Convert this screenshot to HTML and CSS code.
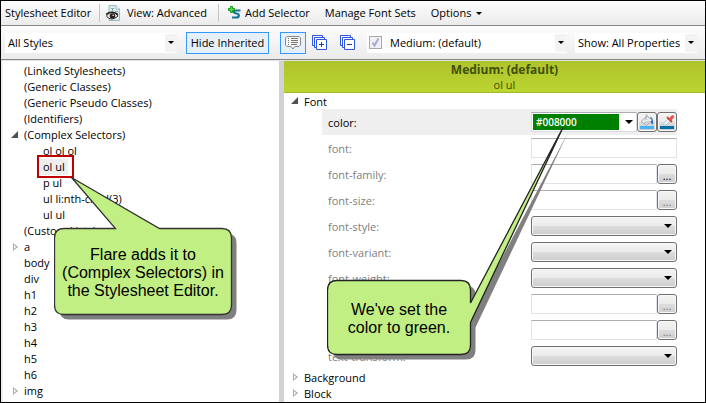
FILE: index.html
```html
<!DOCTYPE html>
<html lang="en">
<head>
<meta charset="utf-8">
<title>Stylesheet Editor</title>
<link rel="stylesheet" href="styles.css">
</head>
<body>
<div class="window">
  <header class="bar menu">
    <span class="title">Stylesheet Editor</span>
    <button class="item view">
      <svg width="15" height="16" viewBox="0 0 15 16"><path d="M3 .5h7l3.500 3.500v11.500H3z" fill="#dcebee" stroke="#9fb9bf"/><path d="M10 .5V4h3.500" fill="#fff" stroke="#9fb9bf"/><path d="M5 3.500h3M6.500 3.500v3M9 6.500h3" stroke="#8aa3a8"/><path d="M.5 11Q3 6.500 7 7.500Q10.500 8 12 11Q8.500 14.500 5 14Q2 13.500.5 11z" fill="#eee" stroke="#333"/><path d="M0 9.500Q5 5 12 9.500" fill="none" stroke="#222" stroke-width="1.500"/><circle cx="6.500" cy="11" r="2.800" fill="#2c211c"/><circle cx="7.200" cy="10.200" r=".8" fill="#fff"/></svg>
      View: Advanced</button>
    <button class="item add">
      <svg width="14" height="14" viewBox="0 0 14 14"><path d="M13.500 4.500H8.500Q6.500 4.700 7 6.300Q7.500 7.300 9.500 7.500Q12 7.800 11.800 9.800Q11.500 11.500 9.500 11.500H5" fill="none" stroke="#14739b" stroke-width="2.200"/><path d="M3.500.5h2v2h2v2h-2v2h-2v-2h-2v-2h2z" fill="#4fe04a" stroke="#139a1c"/></svg>
      Add Selector</button>
    <button class="item">Manage Font Sets</button>
    <button class="item options">Options <i class="caret"></i></button>
  </header>

  <div class="bar tools">
    <span class="pick styles"><select aria-label="Styles shown"><option>All Styles</option></select></span>
    <button class="toggle">Hide Inherited</button>
    <button class="toggle tip" aria-label="Comments">
      <svg width="16" height="15" viewBox="0 0 16 15"><path d="M2 1.500h12l1.500 1.500v7L14 11.500h-4L8 14l-2-2.500H2L.5 10V3z" fill="#f7f7f7" stroke="#888"/><path d="M3 3.500h1M6 3.500h7M3 5.500h1M6 5.500h7M3 7.500h1M6 7.500h7M3 9.500h1M6 9.500h6" stroke="#777"/></svg></button>
    <button class="plain" aria-label="Expand all">
      <svg width="15" height="15" viewBox="0 0 15 15" fill="#fff" stroke="#2f55e0"><path d="M.5.5h10v10H.5z"/><path d="M2.500 2.500h10v10h-10z"/><path d="M4.500 4.500h10v10h-10z"/><path d="M7 9.500h5M9.500 7v5" stroke="#1a3bc0"/></svg></button>
    <button class="plain" aria-label="Collapse all">
      <svg width="15" height="15" viewBox="0 0 15 15" fill="#fff" stroke="#2f55e0"><path d="M.5.5h10v10H.5z"/><path d="M2.500 2.500h10v10h-10z"/><path d="M4.500 4.500h10v10h-10z"/><path d="M7 9.500h5" stroke="#1a3bc0"/></svg></button>
    <span class="pick medium"><span class="check"><input type="checkbox" checked aria-label="Use medium"><svg width="13" height="13" viewBox="0 0 13 13"><path d="M3.500 6.500l2 3 4-7" fill="none" stroke="#a3acd4" stroke-width="2"/></svg></span><select aria-label="Medium"><option>Medium: (default)</option></select></span>
    <span class="pick show"><select aria-label="Show"><option>Show: All Properties</option></select></span>
  </div>

  <main class="panes">
    <nav class="tree">
      <ul>
        <li>(Linked Stylesheets)</li>
        <li>(Generic Classes)</li>
        <li>(Generic Pseudo Classes)</li>
        <li>(Identifiers)</li>
        <li class="open">(Complex Selectors)
          <ul>
            <li>ol ol ol</li>
            <li><span class="selected">ol ul</span></li>
            <li>p ul</li>
            <li>ul li:nth-child(3)</li>
            <li>ul ul</li>
          </ul>
        </li>
        <li>(Custom Lists)</li>
        <li class="closed">a</li>
        <li>body</li>
        <li>div</li>
        <li>h1</li>
        <li>h2</li>
        <li>h3</li>
        <li>h4</li>
        <li>h5</li>
        <li>h6</li>
        <li class="closed">img</li>
      </ul>
    </nav>

    <section class="props">
      <div class="head"><h1>Medium: (default)</h1><p>ol ul</p></div>
      <h2 class="group open">Font</h2>
      <div class="row current"><label for="color">color:</label>
        <div class="field"><span class="combo"><input id="color" value="#008000"><i class="arrow"></i></span>
          <button class="btn" aria-label="Fill"><svg width="16" height="16" viewBox="0 0 16 16"><path d="M1 13.500h14" stroke="#45b4f2" stroke-width="3"/><path d="M11 3q4 1 3 7-1 1-2-1z" fill="#3d6db5"/><path d="M2 7.500L8 2l5 4-5.500 5.500z" fill="#e8eaec" stroke="#a5adb3"/><path d="M7 6V2q0-1.500 1.500-1.500" fill="none" stroke="#aaa"/><path d="M4 8l7-1-3.500 3.500z" fill="#c5cace"/></svg></button>
          <button class="btn" aria-label="Pick color"><svg width="16" height="16" viewBox="0 0 16 16"><path d="M1 13.500h14" stroke="#0870a8" stroke-width="3"/><path d="M4 11l1-2 4-4 2 2-4 4z" fill="#f4f8fa" stroke="#acc"/><path d="M8 3l5 5" stroke="#d04040" stroke-width="2"/><path d="M10 5l2-3q2-1.500 3 0 .5 1.500-1 2.500l-2 2z" fill="#e85050"/></svg></button></div></div>
      <div class="row"><label for="font">font:</label><div class="field"><input id="font" class="text"></div></div>
      <div class="row"><label for="family">font-family:</label><div class="field"><input id="family" class="text"><button class="btn more strong">...</button></div></div>
      <div class="row"><label for="size">font-size:</label><div class="field"><input id="size" class="text"><button class="btn more">...</button></div></div>
      <div class="row"><label for="style">font-style:</label><div class="field drop"><select id="style"></select></div></div>
      <div class="row"><label for="variant">font-variant:</label><div class="field drop"><select id="variant"></select></div></div>
      <div class="row"><label for="weight">font-weight:</label><div class="field drop"><select id="weight"></select></div></div>
      <div class="row"><div class="field"><input class="text" aria-label="Value"><button class="btn more">...</button></div></div>
      <div class="row"><div class="field"><input class="text" aria-label="Value"><button class="btn more">...</button></div></div>
      <div class="row"><label for="transform">text-transform:</label><div class="field drop"><select id="transform"></select></div></div>
      <h2 class="group closed">Background</h2>
      <h2 class="group closed">Block</h2>
    </section>
  </main>
  <aside class="callout first">
    <svg width="185" height="148" viewBox="0 0 185 148"><defs><path id="c1" d="M17.500 1.500L105.500 52.500H168Q177.500 52.500 177.500 62V129Q177.500 138.500 168 138.500H10Q.5 138.500 .5 129V62Q.5 52.500 10 52.500H61.500z"/></defs><use href="#c1" x="5" y="5" fill="#808080"/><use href="#c1" fill="#c1ef83" stroke="#333" stroke-width="1.300"/></svg>
    <p>Flare adds it to<br>(Complex Selectors) in<br>the Stylesheet Editor.</p>
  </aside>
  <aside class="callout second">
    <svg width="246" height="234" viewBox="0 0 246 234"><defs><path id="c2" d="M236 .5L143.500 195.500V218Q143.500 227.500 134 227.500H10Q.5 227.500 .5 218V163Q.5 153.500 10 153.500H134Q143.500 153.500 143.500 163V176z"/></defs><use href="#c2" x="5" y="5" fill="#808080"/><use href="#c2" fill="#c1ef83" stroke="#222" stroke-width="1.300"/></svg>
    <p>We've set the<br>color to green.</p>
  </aside>
</div>
</body>
</html>
```
FILE: styles.css
```css
* { box-sizing: border-box; }
body { margin: 0; font: 11px/16px "Open Sans", sans-serif; color: #000; }
button, input, select { font: inherit; color: inherit; margin: 0; padding: 0; border: 0; border-radius: 0; background: none; }
select, input[type="checkbox"] { appearance: none; }
h1, h2, p, ul { margin: 0; padding: 0; font: inherit; list-style: none; }
svg { display: block; flex: none; }

.window { position: relative; display: flex; flex-direction: column; height: 100vh; overflow: hidden; border: 1px solid #000; background: #fff; }
.bar { display: flex; align-items: center; flex: none; border-bottom: 1px solid #868686; background: linear-gradient(#fdfdfd, #ebebeb); white-space: nowrap; }

.menu { height: 25px; padding-left: 4px; }
.title { width: 94px; }
.item { display: flex; align-items: center; height: 18px; gap: 6px; margin-right: 15px; white-space: nowrap; }
.view, .add { border-left: 1px solid #c4c4c4; padding-left: 6px; }
.view { width: 119px; margin-right: 0; }
.add { padding-left: 8px; gap: 4px; }
.options { gap: 5px; }
.caret, .pick::after { border: 3px solid transparent; border-top-color: #000; border-bottom: 0; }

.tools { height: 34px; padding: 0 8px 0 4px; }
.pick { position: relative; display: flex; align-items: center; height: 20px; background: #fff; }
.pick::before { content: ""; position: absolute; right: 0; top: 1px; width: 12px; height: 18px; background: #f3f3f3; }
.pick::after { content: ""; position: absolute; right: 3px; top: 8px; }
.pick select { position: relative; width: 100%; height: 20px; padding-left: 3px; }
.styles { flex: 0 0 172px; margin-right: 9px; }
.medium { flex: 1; margin: 0 8px 0 12px; }
.medium select { padding-left: 8px; }
.show { flex: 0 0 122px; }
.toggle { display: flex; align-items: center; justify-content: center; width: 83px; height: 22px; border: 1px solid #3399ff; background: #e6f0fa; white-space: nowrap; }
.tip { width: 26px; margin: 0 6px 0 11px; }
.plain { margin-right: 13px; }
.plain + .plain { margin-right: 0; }
.check { position: relative; flex: none; width: 13px; height: 13px; margin-left: 2px; }
.check input { display: block; width: 13px; height: 13px; border: 1px solid #a9a9a9; background: #f0f1f6; }
.check svg { position: absolute; inset: 0; }

.panes { display: flex; flex: 1; min-height: 0; border-top: 1px solid #e3e3e3; }
.tree { flex: 0 0 283px; border-left: 2px solid #eee; border-right: 5px solid #d2d2d2; padding: 2px 0 0 21px; }
.tree li { position: relative; }
.tree ul ul { padding-left: 19px; }
.open::before, .closed::before { content: ""; position: absolute; }
.open::before { left: -13px; top: 4px; width: 7px; height: 7px; background: #505050; clip-path: polygon(100% 0, 100% 100%, 0 100%); }
.closed::before { left: -11px; top: 4px; width: 5px; height: 8px; background: #aaa; clip-path: polygon(0 0, 100% 50%, 0 100%, 0 0, 1px 2px, 1px 6px, 3px 4px, 1px 2px); }
.selected { position: relative; display: inline-block; margin-left: -2px; padding: 0 3px 0 2px; background: #eee; }
.selected::after { content: ""; position: absolute; inset: -4px -6px -3px -4px; border: 2px solid #c00000; }

.props { flex: 1; min-width: 0; }
.head { height: 32px; padding: 1px 0 0 20px; border-bottom: 1px solid #a3b82a; background: linear-gradient(#aec32b, #bcd530); color: #414f0d; text-align: center; }
.head h1 { font-size: 12px; font-weight: 700; }
.head p { line-height: 14px; }
.group { position: relative; margin-left: 20px; height: 16px; line-height: 18px; }
.row { display: flex; align-items: center; height: 26px; margin: 0 28px 0 38px; padding-left: 6px; color: #808080; }
.row label { padding-top: 2px; }
.current { background: #efefef; color: #000; }
.field { display: flex; width: 146px; height: 20px; margin-left: auto; }
.text { flex: 1; min-width: 0; border: 1px solid #dfe3ea; border-top-color: #abadb3; background: #fff; }
.combo { display: flex; align-items: center; flex: 1; min-width: 0; padding: 1px; border: 1px solid #d9dbe2; border-top-color: #abadb3; background: #fff; }
.combo input { width: 86px; height: 16px; padding-left: 3px; background: #008000; color: #fff; font-size: 10px; font-weight: 600; }
.arrow, .drop::after { border: 4px solid transparent; border-top-color: #000; border-bottom: 0; }
.arrow { margin-left: 6px; }
.btn { display: flex; align-items: center; justify-content: center; width: 20px; height: 20px; border: 1px solid #707070; border-radius: 3px; background: linear-gradient(#f3f3f3, #ebebeb 50%, #dddddd 50%, #cdcdcd); color: #777; box-shadow: inset 0 0 0 1px #f8f8f8; }
.more { padding-top: 3px; }
.strong { color: #000; }
.drop { position: relative; }
.drop select { width: 100%; border: 1px solid #707070; border-radius: 3px; background: linear-gradient(#f3f3f3, #ebebeb 50%, #dddddd 50%, #cdcdcd); box-shadow: inset 0 0 0 1px #f8f8f8; }
.drop::after { content: ""; position: absolute; right: 5px; top: 8px; }

.callout { position: absolute; pointer-events: none; color: #000; font: 16px/18px "Liberation Sans", sans-serif; text-align: center; white-space: nowrap; }
.callout p { position: absolute; left: 0; }
.first { left: 53px; top: 175px; }
.first p { width: 178px; top: 70px; }
.second { left: 326px; top: 126px; }
.second p { width: 144px; top: 174px; }
```
